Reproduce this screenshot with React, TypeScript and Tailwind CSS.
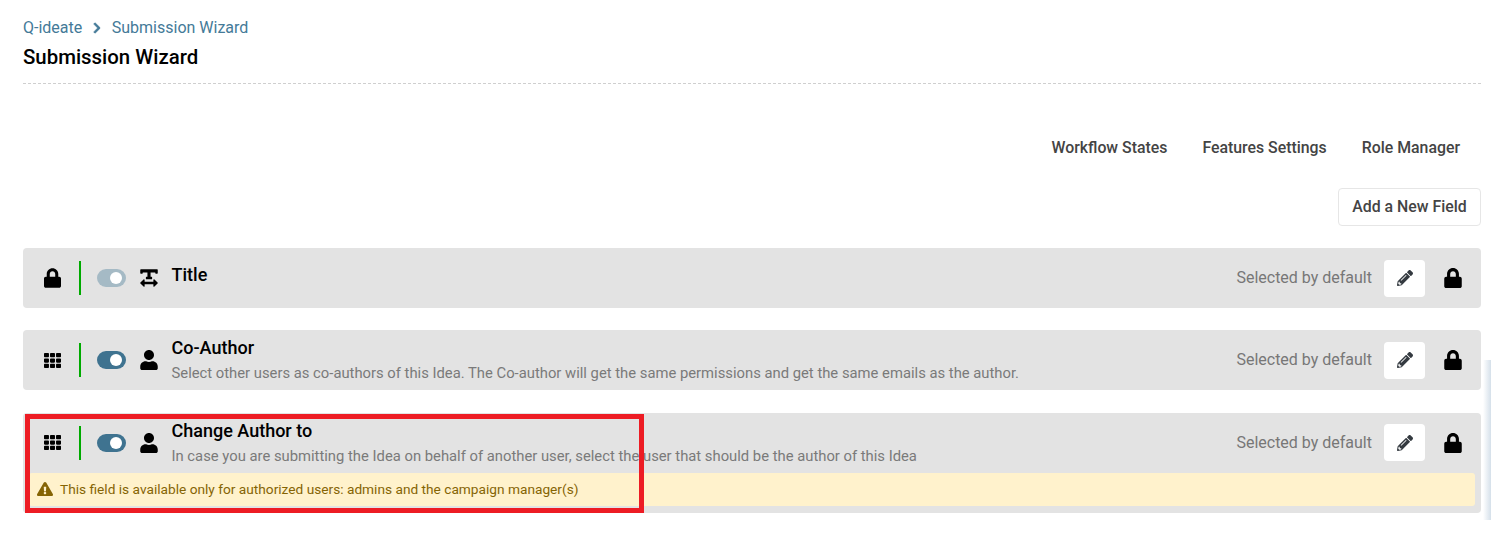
import { FaChevronRight, FaExclamationTriangle, FaLock, FaPencilAlt, FaTextWidth, FaTh, FaUser } from 'react-icons/fa'
import type { ReactNode } from 'react'

const Toggle = ({ disabled }: { disabled?: boolean }) => (
  <div className={`flex h-[18px] w-[29px] items-center justify-end rounded-full pr-[4px] ${disabled ? 'bg-[#a5bac5]' : 'bg-[#3f7390]'}`}>
    <div className="h-[12px] w-[12px] rounded-full bg-white" />
  </div>
)

const FieldRow = ({
  lead,
  icon,
  title,
  description,
  disabled,
  notice,
}: {
  lead: ReactNode
  icon: ReactNode
  title: string
  description?: string
  disabled?: boolean
  notice?: string
}) => (
  <div className={`rounded-[4px] bg-[#e3e3e3] ${notice ? 'pb-[7px]' : ''}`}>
    <div className="flex h-[60px] items-center pl-[21px] pr-[18px]">
      <div className="flex w-[17px] justify-center text-black">{lead}</div>
      <div className="ml-[18px] h-[34px] w-[2px] bg-[#00aa00]" />
      <div className="ml-[16px]"><Toggle disabled={disabled} /></div>
      <div className="ml-[14px] flex w-[18px] justify-center text-black">{icon}</div>
      <div className={`ml-[13.5px] flex h-full flex-col ${description ? 'pt-[6px]' : 'pt-[15px]'}`}>
        <div className="text-[18px] font-medium leading-[24px] text-black">{title}</div>
        {description && <div className="mt-[3px] text-[14.8px] leading-[20px] text-[#7a7a7a]">{description}</div>}
      </div>
      <div className="ml-auto flex items-center">
        <span className="text-[16px] text-[#777777]">Selected by default</span>
        <div className="ml-[12px] flex h-[37px] w-[41px] items-center justify-center rounded-[4px] bg-white text-[#343a40]">
          <FaPencilAlt size={16} />
        </div>
        <div className="ml-[18px] text-black"><FaLock size={20} /></div>
      </div>
    </div>
    {notice && (
      <div className="mx-[6px] flex h-[33px] items-center gap-[7px] rounded-[3px] bg-[#fff2cc] pl-[8px] text-[13.7px] text-[#856404]">
        <FaExclamationTriangle size={16} />
        <span>{notice}</span>
      </div>
    )}
  </div>
)

export default function App() {
  return (
    <div className="relative h-[535px] overflow-hidden bg-white pl-[23px] pr-[10px] font-['Roboto',sans-serif]">
      <div className="flex items-center pt-[17px] text-[16px] leading-[21px] text-[#447a98]">
        <span>Q-ideate</span>
        <FaChevronRight size={12} className="ml-[8.5px] mr-[9px] stroke-[30]" />
        <span>Submission Wizard</span>
      </div>
      <h1 className="mt-[5px] text-[20.4px] font-medium leading-[28px] text-black">Submission Wizard</h1>
      <div className="mt-[12px] border-b border-dashed border-[#cfcfcf]" />

      <div className="mt-[53px] flex justify-end gap-[35px] pr-[21px] text-[15.85px] font-medium leading-[22px] text-[#444444]">
        <span>Workflow States</span>
        <span>Features Settings</span>
        <span>Role Manager</span>
      </div>
      <div className="mt-[29px] flex justify-end">
        <button className="h-[38px] w-[143px] rounded-[4px] border border-[#e6e6e6] bg-white text-[15.85px] font-medium text-[#444444]">
          Add a New Field
        </button>
      </div>

      <div className="mt-[22px] flex flex-col gap-[22.4px]">
        <FieldRow lead={<FaLock size={20} />} icon={<FaTextWidth size={20} />} title="Title" disabled />
        <FieldRow
          lead={<FaTh size={17} />}
          icon={<FaUser size={20} />}
          title="Co-Author"
          description="Select other users as co-authors of this Idea. The Co-author will get the same permissions and get the same emails as the author."
        />
        <FieldRow
          lead={<FaTh size={17} />}
          icon={<FaUser size={20} />}
          title="Change Author to"
          description="In case you are submitting the Idea on behalf of another user, select the user that should be the author of this Idea"
          notice="This field is available only for authorized users: admins and the campaign manager(s)"
        />
      </div>

      {/* annotation drawn over the screenshot */}
      <div className="pointer-events-none absolute left-[25px] top-[414px] h-[99px] w-[619px] border-[5px] border-[#ed1c24]" />
      <div className="pointer-events-none absolute right-0 top-[360px] h-[160px] w-[8px] bg-gradient-to-r from-white to-[#d5e0ea]" />
    </div>
  )
}
